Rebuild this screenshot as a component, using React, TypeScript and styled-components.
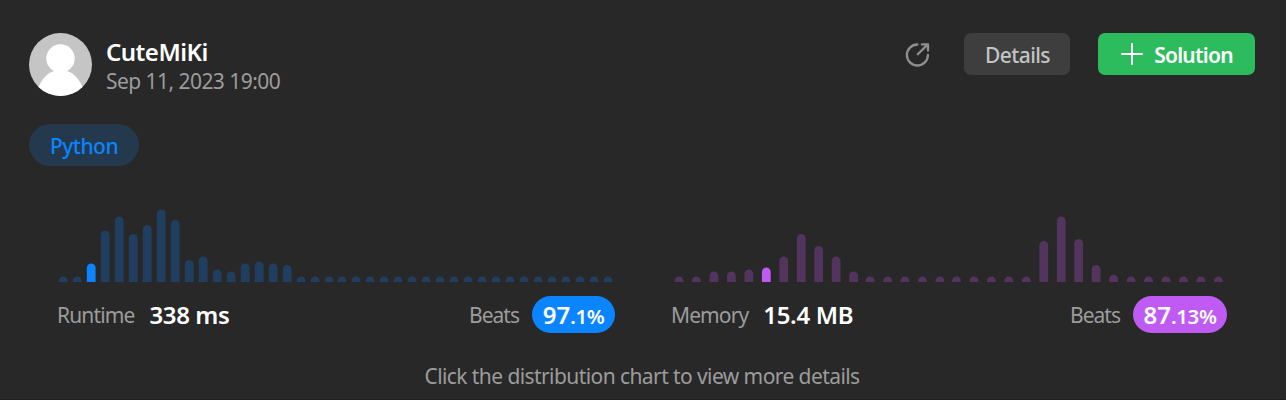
import React from 'react';
import styled, { createGlobalStyle } from 'styled-components';

const GlobalStyle = createGlobalStyle`
  * { box-sizing: border-box; }
  body {
    margin: 0;
    background: #282828;
    font-family: 'Segoe UI', 'Noto Sans', 'Open Sans', sans-serif;
  }
`;

const Panel = styled.main`
  display: flex;
  flex-direction: column;
  width: 1286px;
  height: 400px;
  padding: 33px 31px 0 29px;
  overflow: hidden;
  background: #282828;
  border-bottom: 1px solid #211f20;
`;

const Header = styled.header`
  display: flex;
  align-items: flex-start;
  height: 63px;
`;

const Avatar = styled.svg`
  width: 63px;
  height: 63px;
  margin-right: 14px;
`;

const Identity = styled.div`
  flex: 1;
  padding-top: 4px;
`;

const Text = styled.span<{ $size: number; $color: string; $weight?: number; $track?: number; $line?: number }>`
  display: block;
  white-space: nowrap;
  font-size: ${(p) => p.$size}px;
  line-height: ${(p) => p.$line ?? 30}px;
  color: ${(p) => p.$color};
  font-weight: ${(p) => p.$weight ?? 400};
  letter-spacing: ${(p) => p.$track ?? 0}px;
`;

const Actions = styled.div`
  display: flex;
  align-items: center;
`;

const ShareIcon = styled.svg`
  width: 26px;
  height: 26px;
  margin-right: 34px;
`;

const Button = styled.button<{ $width: number; $bg: string }>`
  display: flex;
  align-items: center;
  justify-content: center;
  width: ${(p) => p.$width}px;
  height: 42px;
  margin: 0;
  padding: 1px 0 0 1px;
  border: 0;
  border-radius: 7px;
  background: ${(p) => p.$bg};
  font-family: inherit;
  & + & { margin-left: 28px; }
`;

const PlusIcon = styled.svg`
  width: 22px;
  height: 22px;
  margin: -2px 11px 0 0;
`;

const LanguageTag = styled.div`
  display: flex;
  align-items: center;
  justify-content: center;
  width: 110px;
  height: 42px;
  margin-top: 28px;
  padding-top: 1px;
  border-radius: 21px;
  background: #24384e;
`;

const Charts = styled.section`
  display: grid;
  grid-template-columns: 614px 612px;
  margin-top: 40px;
`;

const ChartCard = styled.div`
  padding: 0 28px;
`;

const Histogram = styled.svg`
  display: block;
  width: 100%;
  height: 76px;
`;

const Stats = styled.div`
  display: flex;
  align-items: center;
  height: 37px;
  margin-top: 14px;
`;

const Value = styled.div`
  flex: 1;
  margin-left: 15px;
`;

const Badge = styled.div<{ $width: number; $bg: string }>`
  display: flex;
  align-items: baseline;
  justify-content: center;
  width: ${(p) => p.$width}px;
  height: 37px;
  margin-left: 13px;
  padding-top: 4px;
  border-radius: 19px;
  background: ${(p) => p.$bg};
`;

const Hint = styled.footer`
  display: flex;
  justify-content: center;
  margin-top: 28px;
`;

const muted = '#9c9c9c';

type Series = { start: number; heights: number[]; pitch: number; offset: (i: number) => number };

const runtime: Series = {
  start: 1.8,
  pitch: 14,
  offset: (i) => (i > 19 ? -1.2 : 0),
  heights: [5.5, 5.5, 18.5, 51.5, 65.5, 48, 57, 72.5, 62, 22, 25.5, 12.5, 10.5, 18.5, 20.5, 18.5, 17, ...Array(23).fill(5.5)],
};

const memory: Series = {
  start: 3.6,
  pitch: 17.46,
  offset: (i) => (i > 15 ? -1.9 : i > 10 ? -1 : 0),
  heights: [5.5, 5.5, 10.5, 10.5, 12.5, 14.5, 25.5, 48, 36, 25.5, 10.5, ...Array(10).fill(5.5), 41, 65.5, 43, 17, 7.2, ...Array(6).fill(5.5)],
};

function barPath(x: number, h: number) {
  const w = 8.8;
  const r = w / 2;
  const ry = Math.min(r, h);
  return `M${x} 76V${76 - h + ry}A${r} ${ry} 0 0 1 ${x + w} ${76 - h + ry}V76Z`;
}

function Bars({ series, active, color, dim }: { series: Series; active: number; color: string; dim: string }) {
  return (
    <Histogram>
      {series.heights.map((h, i) => (
        <path
          key={i}
          d={barPath(series.start + i * series.pitch + series.offset(i), h)}
          fill={i === active ? color : dim}
        />
      ))}
    </Histogram>
  );
}

export default function App() {
  return (
    <Panel>
      <GlobalStyle />
      <Header>
        <Avatar viewBox="0 0 63 63">
          <defs>
            <clipPath id="avatar"><circle cx="31.5" cy="31.5" r="31.5" /></clipPath>
          </defs>
          <g clipPath="url(#avatar)">
            <rect width="63" height="63" fill="#c5c5c5" />
            <circle cx="31.5" cy="25.5" r="14.2" fill="#fff" />
            <path d="M9 55C13 46 18 40 25 38H38C45 40 50 46 54 55V63H9Z" fill="#fff" />
          </g>
        </Avatar>
        <Identity>
          <Text $size={24} $color="#fff" $weight={600} $track={-0.5}>CuteMiKi</Text>
          <Text $size={21} $color={muted} $track={-0.55} $line={28}>Sep 11, 2023 19:00</Text>
        </Identity>
        <Actions>
          <ShareIcon viewBox="0 0 26 26" fill="none" stroke="#8f8f8f" strokeWidth="2.3" strokeLinecap="round" strokeLinejoin="round">
            <path d="M13.4 3.5A10.5 10.5 0 1 0 23.9 14M13.8 13.2L23.8 3.4M17.9 3.4H24V9.5" />
          </ShareIcon>
          <Button $width={106} $bg="#3e3e3e">
            <Text $size={21} $color="#c3c4c6" $weight={500} $track={-0.6}>Details</Text>
          </Button>
          <Button $width={157} $bg="#2cbb5d">
            <PlusIcon viewBox="0 0 22 22" stroke="#fff" strokeWidth="2" strokeLinecap="round">
              <path d="M11 1V21M1 11H21" />
            </PlusIcon>
            <Text $size={21} $color="#fff" $weight={600} $track={-0.75}>Solution</Text>
          </Button>
        </Actions>
      </Header>
      <LanguageTag>
        <Text $size={21} $color="#0a84ff" $weight={500} $track={-0.5}>Python</Text>
      </LanguageTag>
      <Charts>
        <ChartCard>
          <Bars series={runtime} active={2} color="#0a84ff" dim="#203f60" />
          <Stats>
            <Text $size={21} $color={muted} $track={-0.85}>Runtime</Text>
            <Value><Text $size={24} $color="#fff" $weight={600} $track={-0.4}>338 ms</Text></Value>
            <Text $size={21} $color={muted} $track={-1}>Beats</Text>
            <Badge $width={83} $bg="#0a84ff">
              <Text $size={24} $color="#fff" $weight={600}>97</Text>
              <Text $size={20.5} $color="#fff" $weight={600} $track={-0.4}>.1%</Text>
            </Badge>
          </Stats>
        </ChartCard>
        <ChartCard>
          <Bars series={memory} active={5} color="#bf5af2" dim="#53345f" />
          <Stats>
            <Text $size={21} $color={muted} $track={-0.9}>Memory</Text>
            <Value><Text $size={24} $color="#fff" $weight={600} $track={-0.3}>15.4 MB</Text></Value>
            <Text $size={21} $color={muted} $track={-1}>Beats</Text>
            <Badge $width={94} $bg="#bf5af2">
              <Text $size={24} $color="#fff" $weight={600}>87</Text>
              <Text $size={20.5} $color="#fff" $weight={600} $track={-0.4}>.13%</Text>
            </Badge>
          </Stats>
        </ChartCard>
      </Charts>
      <Hint>
        <Text $size={21} $color={muted} $track={-0.58}>Click the distribution chart to view more details</Text>
      </Hint>
    </Panel>
  );
}
